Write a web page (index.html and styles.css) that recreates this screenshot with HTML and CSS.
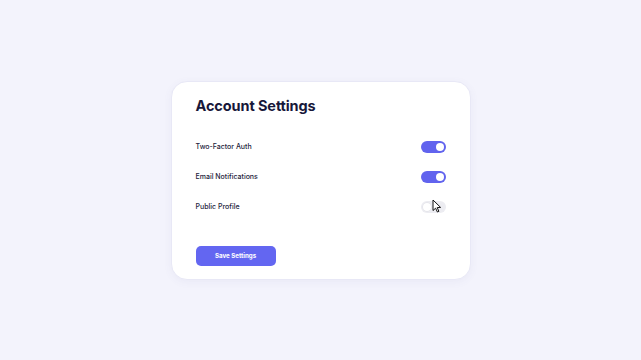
FILE: index.html
```html
<!DOCTYPE html>
<html lang="en">
<head>
<meta charset="utf-8">
<title>Account Settings</title>
<link rel="stylesheet" href="styles.css">
</head>
<body>
<main class="card">
  <h1 class="title">Account Settings</h1>
  <div class="rows">
    <div class="row">
      <span class="label">Two-Factor Auth</span>
      <span class="toggle on"><span class="knob"></span></span>
    </div>
    <div class="row">
      <span class="label">Email Notifications</span>
      <span class="toggle on"><span class="knob"></span></span>
    </div>
    <div class="row">
      <span class="label">Public Profile</span>
      <span class="toggle off"><span class="knob"></span>
        <svg class="cursor" width="10" height="14" viewBox="0 0 10 14" aria-hidden="true">
          <path d="M1 1 L1 11.5 L3.6 9.2 L5.4 13 L6.9 12.3 L5.2 8.6 L8.6 8.4 Z" fill="#fff" stroke="#111" stroke-width="1" stroke-linejoin="round"/>
        </svg>
      </span>
    </div>
  </div>
  <button class="save" type="button">Save Settings</button>
</main>
</body>
</html>
```
FILE: styles.css
```css
* { box-sizing: border-box; }
html, body { margin: 0; padding: 0; }
body {
  width: 641px;
  height: 360px;
  background: #f3f3fc;
  display: flex;
  align-items: center;
  justify-content: center;
  font-family: Inter, "Noto Sans", "Liberation Sans", sans-serif;
}
.card {
  width: 300px;
  background: #ffffff;
  border: 1px solid #e8e8f6;
  border-radius: 16px;
  box-shadow: 0 2px 8px rgba(90, 90, 160, 0.06);
  padding: 14px 24px 13px;
  display: flex;
  flex-direction: column;
  align-items: flex-start;
}
.title {
  margin: 0;
  font-size: 14.5px;
  line-height: 20px;
  font-weight: 700;
  color: #17173a;
  letter-spacing: -0.1px;
}
.rows {
  margin-top: 16px;
  width: 100%;
  display: flex;
  flex-direction: column;
}
.row {
  height: 30px;
  display: flex;
  align-items: center;
  justify-content: space-between;
}
.label {
  font-size: 7px;
  font-weight: 500;
  color: #23233b;
}
.toggle {
  position: relative;
  width: 25px;
  height: 12px;
  border-radius: 6px;
  display: flex;
  align-items: center;
  padding: 0 2px;
}
.toggle.on { background: #6163ee; justify-content: flex-end; }
.toggle.off { background: #ececf1; justify-content: flex-start; }
.knob {
  width: 8px;
  height: 8px;
  border-radius: 50%;
  background: #ffffff;
}
.toggle.off .knob { box-shadow: 0 0 0 0.5px #e0e0e6; }
.cursor {
  position: absolute;
  left: 11px;
  top: -2px;
}
.save {
  margin-top: 24px;
  width: 80px;
  height: 20px;
  border: none;
  border-radius: 5px;
  background: #6366f1;
  color: #ffffff;
  font-family: inherit;
  font-size: 6.2px;
  font-weight: 700;
  padding: 0;
}
```
